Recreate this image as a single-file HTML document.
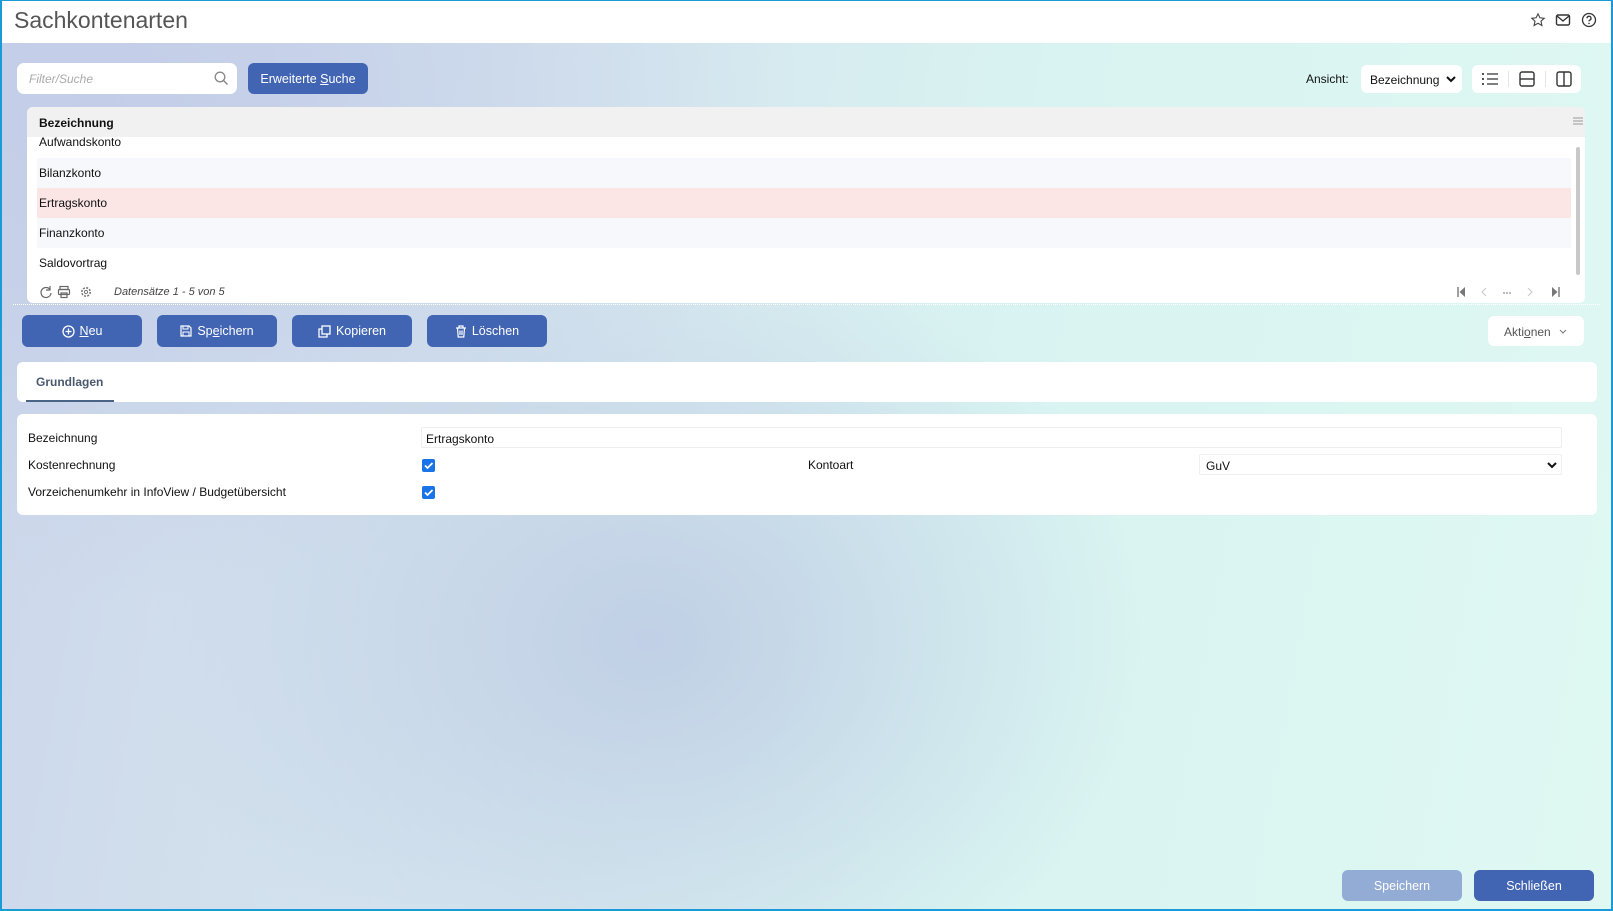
<!DOCTYPE html>
<html><head><meta charset="utf-8"><style>
*{box-sizing:border-box;margin:0;padding:0}
body{width:1613px;height:911px;overflow:hidden;font-family:"Liberation Sans",Arial,sans-serif;font-size:12px;color:#111;position:relative;
background:
radial-gradient(ellipse 500px 400px at 650px 640px, rgba(190,205,228,0.9), rgba(190,205,228,0) 100%),
radial-gradient(ellipse 700px 500px at 100px 100px, #c3cde8 0%, rgba(195,205,232,0) 100%),
linear-gradient(100deg,#cbd6ea 0%,#d6e6ef 35%,#d8f3f1 60%,#dff8f2 100%);}
.frame{position:absolute;inset:0;border:2px solid #1a9ad6;border-top-width:1px;pointer-events:none;z-index:10}
.hdr{position:absolute;left:0;top:0;width:1613px;height:43px;background:#fff}
.title{position:absolute;left:14px;top:7px;font-size:23px;color:#555}
.abs{position:absolute}
.btn{position:absolute;background:#4265b3;color:#fff;border-radius:6px;display:flex;align-items:center;justify-content:center;font-size:12.5px;gap:5px}
.card{position:absolute;background:#fff;border-radius:6px}
.row{position:absolute;left:37px;width:1534px;height:30px;line-height:30px;padding-left:2px;font-size:12px}
.cb{position:absolute;width:13px;height:13px;background:#1a73e8;border-radius:2px}
.cb svg{position:absolute;left:1px;top:1px}
</style></head><body>
<div class="hdr"><div class="title">Sachkontenarten</div>
<svg class="abs" style="left:1530px;top:12px" width="16" height="16" viewBox="0 0 16 16"><path d="M8 1.8l1.9 4 4.3.5-3.2 2.9.9 4.3L8 11.3l-3.9 2.2.9-4.3L1.8 6.3l4.3-.5z" fill="none" stroke="#444" stroke-width="1.1"/></svg>
<svg class="abs" style="left:1555px;top:12px" width="16" height="16" viewBox="0 0 16 16"><rect x="1.5" y="3" width="13" height="10" rx="1.5" fill="none" stroke="#333" stroke-width="1.4"/><path d="M2 4l6 5 6-5" fill="none" stroke="#333" stroke-width="1.4"/></svg>
<svg class="abs" style="left:1581px;top:12px" width="16" height="16" viewBox="0 0 16 16"><circle cx="8" cy="8" r="6.5" fill="none" stroke="#333" stroke-width="1.3"/><path d="M6 6.3a2 2 0 1 1 2.6 1.9c-.5.2-.6.6-.6 1.2" fill="none" stroke="#333" stroke-width="1.3"/><circle cx="8" cy="11.4" r=".8" fill="#333"/></svg>
</div>

<div class="card" style="left:17px;top:63px;width:220px;height:31px;border-radius:7px"><span class="abs" style="left:12px;top:9px;color:#aaa;font-style:italic">Filter/Suche</span>
<svg class="abs" style="left:197px;top:8px" width="15" height="15" viewBox="0 0 15 15"><circle cx="6" cy="6" r="4.8" fill="none" stroke="#888" stroke-width="1.3"/><path d="M9.5 9.5l4 4" stroke="#888" stroke-width="1.4"/></svg></div>
<div class="btn" style="left:248px;top:63px;width:120px;height:31px"><span>Erweiterte <u>S</u>uche</span></div>

<span class="abs" style="left:1306px;top:72px">Ansicht:</span>
<div class="card" style="left:1361px;top:65px;width:101px;height:28px"><span class="abs" style="left:9px;top:8px">Bezeichnung</span>
<svg class="abs" style="left:85px;top:10px" width="10" height="8" viewBox="0 0 10 8"><path d="M1 2l4 4 4-4" fill="none" stroke="#111" stroke-width="2"/></svg></div>
<div class="card" style="left:1472px;top:65px;width:109px;height:28px">
<svg class="abs" style="left:9px;top:6px" width="18" height="16" viewBox="0 0 18 16"><g fill="#555"><rect x="1" y="2" width="2" height="2"/><rect x="1" y="7" width="2" height="2"/><rect x="1" y="12" width="2" height="2"/></g><g stroke="#555" stroke-width="1.4"><path d="M6 3h11M6 8h11M6 13h11"/></g></svg>
<div class="abs" style="left:36px;top:6px;width:1px;height:16px;background:#e4e4e4"></div>
<svg class="abs" style="left:46px;top:5px" width="18" height="18" viewBox="0 0 18 18"><rect x="2" y="2" width="14" height="14" rx="2" fill="none" stroke="#333" stroke-width="1.4"/><path d="M2 9h14" stroke="#333" stroke-width="1.4"/></svg>
<div class="abs" style="left:73px;top:6px;width:1px;height:16px;background:#e4e4e4"></div>
<svg class="abs" style="left:83px;top:5px" width="18" height="18" viewBox="0 0 18 18"><rect x="2" y="2" width="14" height="14" rx="2" fill="none" stroke="#333" stroke-width="1.4"/><path d="M9 2v14" stroke="#333" stroke-width="1.4"/></svg>
</div>

<div class="card" style="left:27px;top:107px;width:1558px;height:196px;overflow:hidden">
<div class="abs" style="left:0;top:0;width:1558px;height:30px;background:#f1f1f1"></div>
<b class="abs" style="left:12px;top:9px">Bezeichnung</b>
<svg class="abs" style="left:1546px;top:9px" width="10" height="10" viewBox="0 0 10 10"><path d="M0 2h10M0 5h10M0 8h10" stroke="#999" stroke-width="1"/></svg>
</div>
<div class="row" style="top:137px;height:18px;line-height:10px;background:#fff">Aufwandskonto</div>
<div class="row" style="top:158px;background:#f7f8fc">Bilanzkonto</div>
<div class="row" style="top:188px;background:#fbe5e5">Ertragskonto</div>
<div class="row" style="top:218px;background:#f7f8fc">Finanzkonto</div>
<div class="row" style="top:248px">Saldovortrag</div>
<div class="abs" style="left:1576px;top:147px;width:4px;height:128px;background:#c8c8c8;border-radius:2px"></div>
<svg class="abs" style="left:39px;top:285px" width="60" height="14" viewBox="0 0 60 14"><path d="M11 4.5A5 5 0 1 0 12 8" fill="none" stroke="#666" stroke-width="1.2"/><path d="M11 1v4H7" fill="none" stroke="#666" stroke-width="1.2"/><g fill="none" stroke="#666" stroke-width="1.2"><rect x="21" y="1.5" width="8" height="3"/><rect x="19.5" y="4.5" width="11" height="5" rx="1"/><rect x="22" y="8" width="6" height="4.5"/></g><circle cx="47" cy="7" r="4.2" fill="none" stroke="#777" stroke-width="1.6" stroke-dasharray="2 1.3"/><circle cx="47" cy="7" r="1.6" fill="none" stroke="#777" stroke-width="1"/></svg>
<i class="abs" style="left:114px;top:286px;font-size:11px;color:#444">Datensätze 1 - 5 von 5</i>
<svg class="abs" style="left:1456px;top:286px" width="115" height="12" viewBox="0 0 115 12"><path d="M2 1v10" stroke="#777" stroke-width="1.4"/><path d="M9 1L3.5 6 9 11z" fill="#777"/><path d="M30 2l-4 4 4 4" fill="none" stroke="#ccc" stroke-width="1.2"/><g fill="#888"><circle cx="48" cy="7" r=".9"/><circle cx="51" cy="7" r=".9"/><circle cx="54" cy="7" r=".9"/></g><path d="M72 2l4 4-4 4" fill="none" stroke="#ccc" stroke-width="1.2"/><path d="M96 1L101.5 6 96 11z" fill="#777"/><path d="M103 1v10" stroke="#777" stroke-width="1.4"/></svg>
<div class="abs" style="left:13px;top:304px;width:1587px;border-top:1px dotted #fff"></div>

<div class="btn" style="left:22px;top:315px;width:120px;height:32px"><svg width="13" height="13" viewBox="0 0 13 13"><circle cx="6.5" cy="6.5" r="5.5" fill="none" stroke="#fff" stroke-width="1.3"/><path d="M6.5 3.5v6M3.5 6.5h6" stroke="#fff" stroke-width="1.3"/></svg><span><u>N</u>eu</span></div>
<div class="btn" style="left:157px;top:315px;width:120px;height:32px"><svg width="12" height="12" viewBox="0 0 12 12"><path d="M1 1h8l2 2v8H1z" fill="none" stroke="#fff" stroke-width="1.2"/><rect x="3" y="1" width="5" height="3" fill="none" stroke="#fff"/><rect x="3" y="7" width="6" height="4" fill="none" stroke="#fff"/></svg><span>Sp<u>e</u>ichern</span></div>
<div class="btn" style="left:292px;top:315px;width:120px;height:32px"><svg width="13" height="13" viewBox="0 0 13 13"><rect x="4" y="1" width="8" height="8" fill="none" stroke="#fff" stroke-width="1.3"/><path d="M4 4H1v8h8V9" fill="none" stroke="#fff" stroke-width="1.3"/></svg><span>Kopieren</span></div>
<div class="btn" style="left:427px;top:315px;width:120px;height:32px"><svg width="12" height="13" viewBox="0 0 12 13"><path d="M1 3h10M4 3V1h4v2M2.5 3l.7 9h5.6l.7-9M5 5.5v4.5M7 5.5v4.5" fill="none" stroke="#fff" stroke-width="1.2"/></svg><span>Löschen</span></div>
<div class="card" style="left:1488px;top:316px;width:96px;height:30px;color:#555"><span class="abs" style="left:16px;top:9px">Akti<u>o</u>nen</span><svg class="abs" style="left:71px;top:13px" width="8" height="5" viewBox="0 0 8 5"><path d="M1 1l3 3 3-3" fill="none" stroke="#777"/></svg></div>

<div class="card" style="left:17px;top:362px;width:1580px;height:40px"><b class="abs" style="left:19px;top:13px;color:#4a5a6e">Grundlagen</b><div class="abs" style="left:9px;top:38px;width:88px;height:2px;background:#4a6486"></div></div>

<div class="card" style="left:17px;top:414px;width:1580px;height:101px">
<span class="abs" style="left:11px;top:17px">Bezeichnung</span>
<span class="abs" style="left:11px;top:44px">Kostenrechnung</span>
<span class="abs" style="left:11px;top:71px">Vorzeichenumkehr in InfoView / Budgetübersicht</span>
<div class="abs" style="left:404px;top:13px;width:1141px;height:21px;border:1px solid #eee;border-radius:2px"><span class="abs" style="left:4px;top:4px">Ertragskonto</span></div>
<span class="abs" style="left:791px;top:44px">Kontoart</span>
<div class="abs" style="left:1182px;top:40px;width:363px;height:21px;border:1px solid #eee;border-radius:2px"><span class="abs" style="left:6px;top:4px">GuV</span><svg class="abs" style="left:347px;top:6px" width="10" height="8" viewBox="0 0 10 8"><path d="M1 2l4 4 4-4" fill="none" stroke="#111" stroke-width="2"/></svg></div>
<div class="cb" style="left:405px;top:45px"><svg width="11" height="11" viewBox="0 0 11 11"><path d="M2 5.5l2.5 2.5 5-5" fill="none" stroke="#fff" stroke-width="1.8"/></svg></div>
<div class="cb" style="left:405px;top:72px"><svg width="11" height="11" viewBox="0 0 11 11"><path d="M2 5.5l2.5 2.5 5-5" fill="none" stroke="#fff" stroke-width="1.8"/></svg></div>
</div>

<div class="btn" style="left:1342px;top:870px;width:120px;height:31px;background:#93acd6"><span>Speichern</span></div>
<div class="btn" style="left:1474px;top:870px;width:120px;height:31px"><span>Schließen</span></div>
<div class="frame"></div>
</body></html>
